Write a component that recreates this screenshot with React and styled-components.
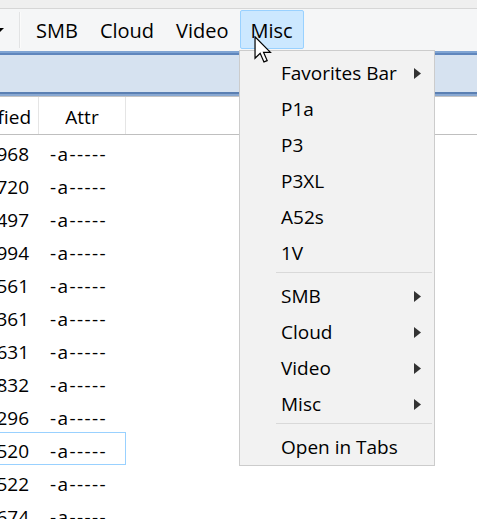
import React from "react";
import styled, { createGlobalStyle } from "styled-components";

const Global = createGlobalStyle`
  html, body { margin: 0; padding: 0; background: #ffffff; }
  body { font-family: "Open Sans", "Noto Sans", sans-serif; }
`;

const Screen = styled.div`
  position: relative;
  width: 477px;
  height: 519px;
  overflow: hidden;
  background: #ffffff;
  font-family: "Open Sans", "Noto Sans", sans-serif;
  font-size: 19px;
  color: #000;
`;

const TopStrip = styled.div`
  height: 8px;
  background: #efefef;
  border-bottom: 1px solid #d6d6d6;
`;

const Toolbar = styled.div`
  height: 42px;
  background: #f5f6f7;
  display: flex;
  align-items: flex-start;
  padding-top: 1px;
  box-sizing: border-box;
  font-size: 20px;
`;

const DropArrow = styled.div`
  width: 19px;
  height: 39px;
  display: flex;
  align-items: center;
  svg { display: block; }
`;

const ToolSep = styled.div`
  width: 1px;
  height: 36px;
  margin-top: 2px;
  background: #e2e3e4;
  border-right: 1px solid #fbfbfb;
  margin-right: 4px;
`;

const ToolButton = styled.div`
  height: 39px;
  box-sizing: border-box;
  padding: 2px 10px 0;
  display: flex;
  align-items: center;
  border: 1px solid ${(p) => (p.$active ? "#99d1ff" : "transparent")};
  background: ${(p) => (p.$active ? "#cce8ff" : "transparent")};
  border-radius: 2px;
  white-space: nowrap;
`;

const Band = styled.div`
  height: 46px;
  box-sizing: border-box;
  background: #d6e2f0;
  border-top: 2px solid #7fa4d3;
  border-bottom: 1px solid #c4c4c4;
  display: flex;
  flex-direction: column;
  justify-content: space-between;
`;

const BandLine = styled.div`
  height: ${(p) => p.$h || 2}px;
  background: ${(p) => p.$c};
`;

const HeaderRow = styled.div`
  display: flex;
  height: 38px;
  box-sizing: border-box;
  border-bottom: 1px solid #bfbfbf;
`;

const HeadCell = styled.div`
  width: ${(p) => p.$w}px;
  flex: none;
  box-sizing: border-box;
  border-right: 1px solid #e5e5e5;
  display: flex;
  align-items: center;
  justify-content: ${(p) => p.$align || "center"};
  padding-right: ${(p) => p.$pr || 0}px;
  padding-top: 2px;
  overflow: hidden;
  white-space: nowrap;
`;

const List = styled.div`
  display: flex;
  flex-direction: column;
`;

const Row = styled.div`
  display: flex;
  width: 126px;
  height: 33px;
  box-sizing: border-box;
  border: 1px solid ${(p) => (p.$focused ? "#99d1ff" : "transparent")};
  border-left: none;
  flex: none;
`;

const NumCell = styled.div`
  width: 39px;
  flex: none;
  display: flex;
  justify-content: flex-end;
  align-items: center;
  padding: 5px 10px 0 0;
  box-sizing: border-box;
  overflow: hidden;
  white-space: nowrap;
`;

const AttrCell = styled.div`
  flex: 1;
  display: flex;
  align-items: center;
  padding: 5px 0 0 11px;
  white-space: nowrap;
  letter-spacing: 1.4px;
`;

const Menu = styled.div`
  position: absolute;
  left: 239px;
  top: 50px;
  width: 196px;
  box-sizing: border-box;
  background: #f2f2f2;
  border: 1px solid #cccccc;
  padding: 4px 0 0 0;
  display: flex;
  flex-direction: column;
`;

const MenuItem = styled.div`
  height: 36px;
  display: flex;
  align-items: center;
  padding-left: 41px;
  padding-right: 13px;
  justify-content: space-between;
  white-space: nowrap;
`;

const SubArrow = styled.svg`
  display: block;
  flex: none;
`;

const MenuSep = styled.div`
  height: 1px;
  background: #d9d9d9;
  margin: 1px 2px 5px 36px;
`;

const Cursor = styled.svg`
  position: absolute;
  left: 254px;
  top: 36px;
  pointer-events: none;
`;

const rows = [
  "2023 10:14:08.968",
  "2023 10:14:08.720",
  "2023 10:14:08.497",
  "2023 10:14:08.994",
  "2023 10:14:08.561",
  "2023 10:14:08.361",
  "2023 10:14:08.631",
  "2023 10:14:08.832",
  "2023 10:14:08.296",
  "2023 10:14:08.520",
  "2023 10:14:08.522",
  "2023 10:14:08.674",
];

const Arrow = () => (
  <SubArrow width="7" height="11" viewBox="0 0 7 11">
    <polygon points="0,0 7,5.5 0,11" fill="#333333" />
  </SubArrow>
);

const menu = [
  { label: "Favorites Bar", sub: true },
  { label: "P1a" },
  { label: "P3" },
  { label: "P3XL" },
  { label: "A52s" },
  { label: "1V" },
  { sep: true },
  { label: "SMB", sub: true },
  { label: "Cloud", sub: true },
  { label: "Video", sub: true },
  { label: "Misc", sub: true },
  { sep: true },
  { label: "Open in Tabs" },
];

export default function App() {
  return (
    <>
      <Global />
      <Screen>
        <TopStrip />
        <Toolbar>
          <DropArrow>
            <svg width="4" height="4" viewBox="0 0 4 4">
              <polygon points="0,0 4,0 0,4" fill="#000" />
            </svg>
          </DropArrow>
          <ToolSep />
          <ToolButton>SMB</ToolButton>
          <ToolButton>Cloud</ToolButton>
          <ToolButton>Video</ToolButton>
          <ToolButton $active>Misc</ToolButton>
        </Toolbar>
        <Band>
          <BandLine $c="#5f86bd" $h={2} />
          <div>
            <BandLine $c="#5b80b3" $h={2} />
            <BandLine $c="#89a8d1" $h={2} />
          </div>
        </Band>
        <HeaderRow>
          <HeadCell $w={39} $align="flex-end" $pr={7}>Modified</HeadCell>
          <HeadCell $w={87}>Attr</HeadCell>
        </HeaderRow>
        <List>
          {rows.map((r, i) => (
            <Row key={i} $focused={i === 9}>
              <NumCell>{r}</NumCell>
              <AttrCell>-a-----</AttrCell>
            </Row>
          ))}
        </List>
        <Menu>
          {menu.map((m, i) =>
            m.sep ? (
              <MenuSep key={i} />
            ) : (
              <MenuItem key={i}>
                <span>{m.label}</span>
                {m.sub && <Arrow />}
              </MenuItem>
            )
          )}
        </Menu>
        <Cursor width="18" height="27" viewBox="0 0 13 20">
          <polygon
            points="0.6,0.6 0.6,16.5 4.4,12.8 7.2,19.2 9.6,18.2 6.9,12.1 12,12.1"
            fill="#ffffff"
            stroke="#000000"
            strokeWidth="0.9"
            strokeLinejoin="miter"
          />
        </Cursor>
      </Screen>
    </>
  );
}
